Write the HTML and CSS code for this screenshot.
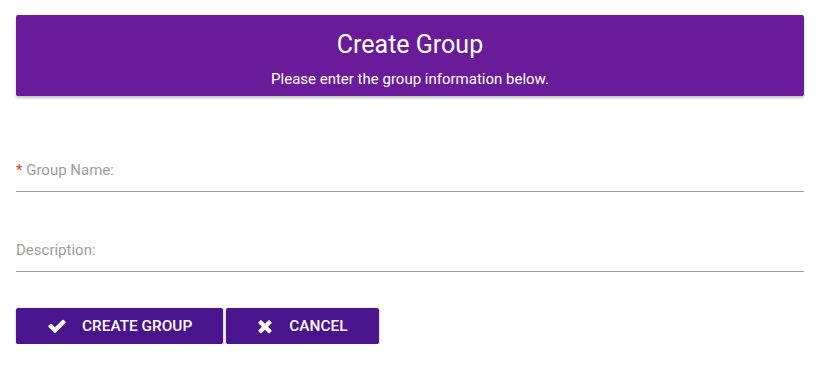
FILE: index.html
```html
<!DOCTYPE html>
<html>
<head>
    <title>Create Group</title>
    <meta charset="UTF-8">
    <link rel="stylesheet" href="styles.css">
</head>
<body>
    <div class="page">
        <div class="header">
            <h1>Create Group</h1>
            <p>Please enter the group information below.</p>
        </div>

        <form class="group-form">
            <label class="field first">
                <span class="required">*</span> Group Name:
            </label>
            <label class="field">
                Description:
            </label>

            <div class="actions">
                <button type="submit" class="btn">
                    <svg class="icon check" viewBox="0 0 1792 1792"><path d="M1671 566q0 40-28 68l-724 724-136 136q-28 28-68 28t-68-28l-136-136-362-362q-28-28-28-68t28-68l136-136q28-28 68-28t68 28l294 295 656-657q28-28 68-28t68 28l136 136q28 28 28 68z"/></svg>
                    Create Group
                </button>
                <button type="button" class="btn">
                    <svg class="icon times" viewBox="0 0 1408 1792"><path d="M1298 1322q0 40-28 68l-136 136q-28 28-68 28t-68-28l-294-294-294 294q-28 28-68 28t-68-28l-136-136q-28-28-28-68t28-68l294-294-294-294q-28-28-28-68t28-68l136-136q28-28 68-28t68 28l294 294 294-294q28-28 68-28t68 28l136 136q28 28 28 68t-28 68l-294 294 294 294q28 28 28 68z"/></svg>
                    Cancel
                </button>
            </div>
        </form>
    </div>
</body>
</html>
```

FILE: styles.css
```css
body {
  margin: 0;
  font-family: Roboto, "Liberation Sans", sans-serif;
  background: #fff;
}

.page {
  padding: 15px 18px 0 16px;
}

/* Purple banner */
.header {
  background-color: #6a1b9a;
  color: #fff;
  text-align: center;
  padding: 16px 0 7px;
  border-radius: 2px;
  box-shadow: 0 2px 3px rgba(0, 0, 0, 0.25);
}

.header h1 {
  margin: 0;
  font-size: 25px;
  font-weight: 400;
  line-height: 28px;
}

.header p {
  margin: 10px 0 0;
  font-size: 15px;
  line-height: 20px;
}

/* Form fields */
.group-form {
  display: flex;
  flex-direction: column;
}

.field {
  display: block;
  color: #9e9e9e;
  font-size: 15px;
  line-height: 20px;
  padding-bottom: 11px;
  border-bottom: 1px solid #9e9e9e;
  margin-top: 48px;
}

.field.first {
  margin-top: 64px;
}

.required {
  color: #e53935;
}

/* Buttons */
.actions {
  display: flex;
  gap: 3px;
  margin-top: 36px;
}

.btn {
  display: flex;
  align-items: center;
  gap: 16px;
  height: 36px;
  padding: 0 31px 0 32px;
  border: none;
  border-radius: 2px;
  background-color: #4a148c;
  color: #fff;
  font-family: Roboto, "Liberation Sans", sans-serif;
  font-size: 15.4px;
  font-weight: 500;
  text-transform: uppercase;
  box-shadow: 0 1px 3px rgba(0, 0, 0, 0.3);
}

.icon {
  fill: #fff;
}

.icon.check {
  width: 20px;
  height: 20px;
  margin: 0 -1px;
}

.icon.times {
  width: 16px;
  height: 20px;
  margin: 0 0 0 -1px;
}
```
